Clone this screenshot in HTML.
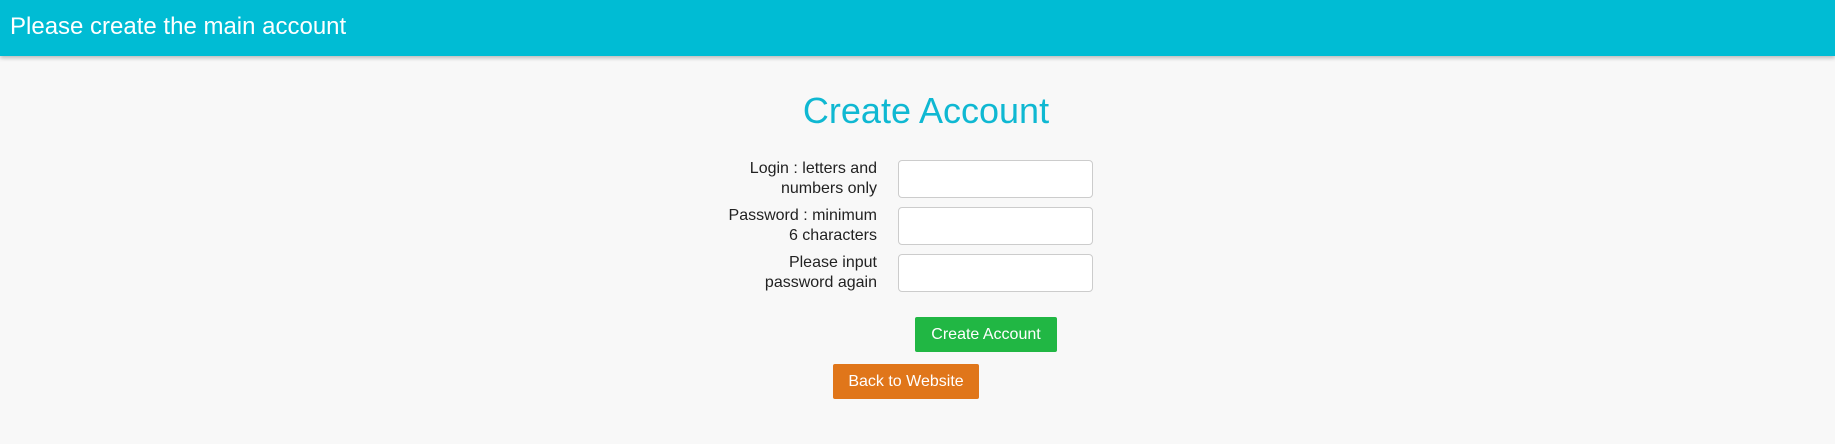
<!DOCTYPE html>
<html><head><meta charset="utf-8"><style>
html,body{margin:0;padding:0;width:1835px;height:444px;background:#f8f8f8;overflow:hidden;font-family:"Liberation Sans",sans-serif;}
.hdr{position:absolute;left:0;top:0;width:1835px;height:56px;background:#00bcd4;box-shadow:0 2px 4px rgba(0,0,0,0.25);}
.hdr span{position:absolute;left:10px;top:13px;font-size:24px;color:#fff;}
.title{position:absolute;left:0;width:1852px;text-align:center;top:89px;font-size:36px;color:#0fb8d2;line-height:44px;}
.lbl{position:absolute;right:958px;width:220px;text-align:right;font-size:16px;line-height:20px;color:#222;}
.inp{position:absolute;left:898px;width:193px;height:36px;background:#fff;border:1px solid #ccc;border-radius:4px;}
.btn{position:absolute;color:#fff;font-size:16px;text-align:center;border-radius:2px;}
</style></head><body>
<div class="hdr"><span>Please create the main account</span></div>
<div class="title">Create Account</div>
<div class="lbl" style="top:159px">Login : letters and<br>numbers only</div>
<div class="lbl" style="top:206px">Password : minimum<br>6 characters</div>
<div class="lbl" style="top:253px">Please input<br>password again</div>
<div class="inp" style="top:160px"></div>
<div class="inp" style="top:207px"></div>
<div class="inp" style="top:254px"></div>
<div class="btn" style="left:915px;top:317px;width:142px;height:35px;line-height:35px;background:#21b744;">Create Account</div>
<div class="btn" style="left:833px;top:364px;width:146px;height:35px;line-height:35px;background:#e0761a;">Back to Website</div>
</body></html>
